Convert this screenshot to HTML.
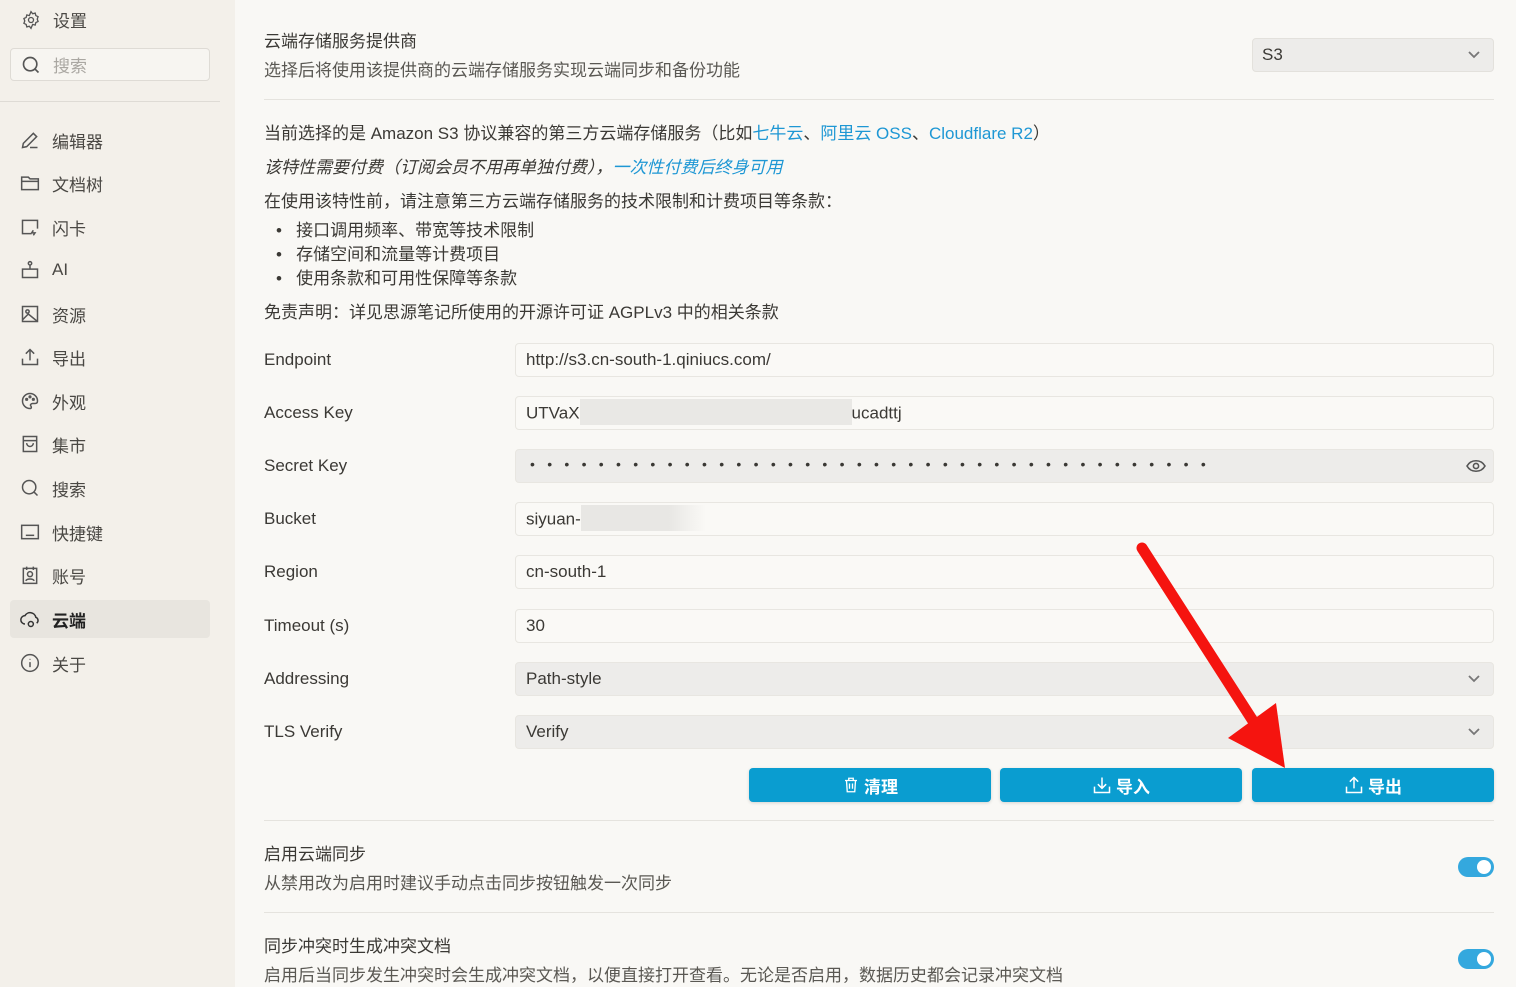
<!DOCTYPE html>
<html><head><meta charset="utf-8"><style>
*{box-sizing:border-box;margin:0;padding:0}
body{width:1516px;height:987px;overflow:hidden;background:#f9f8f5;font-family:"Liberation Sans","Noto Sans CJK SC",sans-serif;color:#3b3935;position:relative}
.a{position:absolute;white-space:nowrap}
#side{position:absolute;left:0;top:0;width:235px;height:987px;background:#f3f0ea}
.ni{position:absolute;left:10px;width:200px;height:38px;display:flex;align-items:center;font-size:17px;color:#4a4844}
.ni svg{margin:0 12px 0 10px}
.ni.on{background:#e8e5df;border-radius:4px;font-weight:bold;color:#222}
.t{font-size:17px;color:#3b3935}
.d{font-size:17px;color:#5a5853}
.lnk{color:#1e97d4}
.inp{position:absolute;left:515px;width:979px;height:34px;border:1px solid #e8e6e1;border-radius:4px;background:#faf9f6;font-size:17px;padding:6px 10px;color:#3b3935}
.gray{background:#edecea}
.lab{position:absolute;left:264px;font-size:17px;color:#3b3935}
.btn{position:absolute;top:768px;width:242px;height:34px;background:#0a9dd0;border-radius:4px;color:#fff;font-weight:bold;font-size:17px;display:flex;align-items:center;justify-content:center;gap:4px;box-shadow:0 1px 3px rgba(0,0,0,.15)}
.hr{position:absolute;left:264px;width:1230px;height:1px;background:#e5e3de}
.tg{position:absolute;left:1458px;width:36px;height:20px;border-radius:10px;background:#34a8de}
.tg:after{content:"";position:absolute;right:3px;top:3px;width:14px;height:14px;border-radius:50%;background:#fff}
.chev{position:absolute;right:12px;top:11px}
</style></head><body>
<div id="side">
<div class="a" style="left:21px;top:7px;display:flex;align-items:center;font-size:17px;color:#4a4844"><svg width="20" height="20" viewBox="0 0 24 24" fill="none" stroke="#555" stroke-width="1.6"><circle cx="12" cy="12" r="3"/><path d="M12 2l2 2.5 3-.8.8 3 2.7 1.3-1 2.9 1 2.9-2.7 1.3-.8 3-3-.8L12 22l-2-2.5-3 .8-.8-3L3.5 16l1-2.9-1-2.9 2.7-1.3.8-3 3 .8z"/></svg><span style="margin-left:12px">设置</span></div>
<div class="a" style="left:10px;top:48px;width:200px;height:33px;border:1px solid #dedbd5;border-radius:4px;background:#f7f5f1;display:flex;align-items:center;font-size:17px;color:#aaa7a2"><svg style="margin:0 12px 0 10px" width="20" height="20" viewBox="0 0 24 24" fill="none" stroke="#555" stroke-width="2"><circle cx="11" cy="11" r="8"/><path d="M17 17l4 4"/></svg>搜索</div>
<div class="a" style="left:0;top:101px;width:220px;height:1px;background:#dedbd5"></div>
<div class="ni" style="top:121px"><svg width="20" height="20" viewBox="0 0 24 24" fill="none" stroke="#555" stroke-width="1.8"><path d="M3 21l1-5L16 4l4 4L8 20zM12 21h9"/></svg>编辑器</div>
<div class="ni" style="top:164px"><svg width="20" height="20" viewBox="0 0 24 24" fill="none" stroke="#555" stroke-width="1.8"><path d="M2 5h8l2 2h10v13H2zM2 10h20"/></svg>文档树</div>
<div class="ni" style="top:208px"><svg width="20" height="20" viewBox="0 0 24 24" fill="none" stroke="#555" stroke-width="1.8"><path d="M14 20H3V4h18v10M16 16l-2 3h4l-2 3"/></svg>闪卡</div>
<div class="ni" style="top:251px"><svg width="20" height="20" viewBox="0 0 24 24" fill="none" stroke="#555" stroke-width="1.8"><circle cx="12" cy="4" r="2"/><path d="M12 6v5M3 11h18v10H3z"/></svg>AI</div>
<div class="ni" style="top:295px"><svg width="20" height="20" viewBox="0 0 24 24" fill="none" stroke="#555" stroke-width="1.8"><rect x="3" y="3" width="18" height="18"/><circle cx="9" cy="9" r="2"/><path d="M3 19l7-7 11 9"/></svg>资源</div>
<div class="ni" style="top:338px"><svg width="20" height="20" viewBox="0 0 24 24" fill="none" stroke="#555" stroke-width="1.8"><path d="M3 14v7h18v-7M12 16V3M7 8l5-5 5 5"/></svg>导出</div>
<div class="ni" style="top:382px"><svg width="20" height="20" viewBox="0 0 24 24" fill="none" stroke="#555" stroke-width="1.8"><path d="M12 3a9 9 0 100 18c2 0 2-2 1-3s0-3 2-3h3c2 0 3-1 3-3 0-5-4-9-9-9z"/><circle cx="8" cy="10" r="1"/><circle cx="12" cy="7" r="1"/><circle cx="16" cy="10" r="1"/></svg>外观</div>
<div class="ni" style="top:425px"><svg width="20" height="20" viewBox="0 0 24 24" fill="none" stroke="#555" stroke-width="1.8"><path d="M4 3h16v18H4zM4 8h16M8 11a4 4 0 008 0"/></svg>集市</div>
<div class="ni" style="top:469px"><svg width="20" height="20" viewBox="0 0 24 24" fill="none" stroke="#555" stroke-width="1.8"><circle cx="11" cy="11" r="8"/><path d="M17 17l4 4"/></svg>搜索</div>
<div class="ni" style="top:513px"><svg width="20" height="20" viewBox="0 0 24 24" fill="none" stroke="#555" stroke-width="1.8"><rect x="2" y="4" width="20" height="16"/><path d="M7 16h10"/></svg>快捷键</div>
<div class="ni" style="top:556px"><svg width="20" height="20" viewBox="0 0 24 24" fill="none" stroke="#555" stroke-width="1.8"><path d="M4 4h16v18H4zM8 2v4M16 2v4"/><circle cx="12" cy="11" r="3"/><path d="M7 19c1-3 9-3 10 0"/></svg>账号</div>
<div class="ni on" style="top:600px"><svg width="20" height="20" viewBox="0 0 24 24" fill="none" stroke="#333" stroke-width="1.8"><path d="M6 18a5 5 0 010-10 7 7 0 0113 2 4 4 0 011 7"/><circle cx="13" cy="18" r="3"/></svg>云端</div>
<div class="ni" style="top:644px"><svg width="20" height="20" viewBox="0 0 24 24" fill="none" stroke="#555" stroke-width="1.8"><circle cx="12" cy="12" r="10"/><path d="M12 11v6M12 7v1"/></svg>关于</div>
</div>

<div class="a t" style="left:264px;top:27px">云端存储服务提供商</div>
<div class="a d" style="left:264px;top:56px">选择后将使用该提供商的云端存储服务实现云端同步和备份功能</div>
<div class="a" style="left:1252px;top:38px;width:242px;height:34px;background:#edecea;border:1px solid #e3e1dc;border-radius:4px;font-size:17px;padding:6px 9px">S3<svg class="chev" width="14" height="10" viewBox="0 0 14 10"><path d="M2 2l5 5 5-5" fill="none" stroke="#777" stroke-width="1.8"/></svg></div>
<div class="hr" style="top:99px"></div>

<div class="a t" style="left:264px;top:119px">当前选择的是 Amazon S3 协议兼容的第三方云端存储服务（比如<span class="lnk">七牛云</span>、<span class="lnk">阿里云 OSS</span>、<span class="lnk">Cloudflare R2</span>）</div>
<div class="a t" style="left:264px;top:153px;font-style:italic">该特性需要付费（订阅会员不用再单独付费），<span class="lnk">一次性付费后终身可用</span></div>
<div class="a t" style="left:264px;top:187px">在使用该特性前，请注意第三方云端存储服务的技术限制和计费项目等条款：</div>
<div class="a t" style="left:276px;top:216px">•&nbsp;&nbsp;&nbsp;接口调用频率、带宽等技术限制</div>
<div class="a t" style="left:276px;top:240px">•&nbsp;&nbsp;&nbsp;存储空间和流量等计费项目</div>
<div class="a t" style="left:276px;top:264px">•&nbsp;&nbsp;&nbsp;使用条款和可用性保障等条款</div>
<div class="a t" style="left:264px;top:298px">免责声明：详见思源笔记所使用的开源许可证 AGPLv3 中的相关条款</div>

<div class="lab" style="top:350px">Endpoint</div><div class="inp" style="top:343px">http://s3.cn-south-1.qiniucs.com/</div>
<div class="lab" style="top:403px">Access Key</div><div class="inp" style="top:396px">UTVaX<span style="display:inline-block;width:272px;height:26px;background:#e9e8e5;vertical-align:middle;margin-top:-4px"></span>ucadttj</div>
<div class="lab" style="top:456px">Secret Key</div><div class="inp gray" style="top:449px;letter-spacing:12.3px;font-size:14px;padding-top:6px;padding-left:14px">••••••••••••••••••••••••••••••••••••••••<svg style="position:absolute;right:7px;top:9px" width="20" height="14" viewBox="0 0 20 14"><path d="M1 7c4-7 14-7 18 0-4 7-14 7-18 0z" fill="none" stroke="#555" stroke-width="1.6"/><circle cx="10" cy="7" r="2.6" fill="none" stroke="#555" stroke-width="1.6"/></svg></div>
<div class="lab" style="top:509px">Bucket</div><div class="inp" style="top:502px">siyuan-<span style="display:inline-block;width:125px;height:26px;background:linear-gradient(90deg,#e8e7e4 70%,#faf9f6);vertical-align:middle;margin-top:-4px"></span></div>
<div class="lab" style="top:562px">Region</div><div class="inp" style="top:555px">cn-south-1</div>
<div class="lab" style="top:616px">Timeout (s)</div><div class="inp" style="top:609px">30</div>
<div class="lab" style="top:669px">Addressing</div><div class="inp gray" style="top:662px">Path-style<svg class="chev" width="14" height="10" viewBox="0 0 14 10"><path d="M2 2l5 5 5-5" fill="none" stroke="#777" stroke-width="1.8"/></svg></div>
<div class="lab" style="top:722px">TLS Verify</div><div class="inp gray" style="top:715px">Verify<svg class="chev" width="14" height="10" viewBox="0 0 14 10"><path d="M2 2l5 5 5-5" fill="none" stroke="#777" stroke-width="1.8"/></svg></div>

<div class="btn" style="left:749px"><svg width="18" height="18" viewBox="0 0 24 24" fill="none" stroke="#fff" stroke-width="1.8"><path d="M4 6h16M9 6V3h6v3M6 6l1 15h10l1-15M10 10v7M14 10v7"/></svg>清理</div>
<div class="btn" style="left:1000px"><svg width="20" height="20" viewBox="0 0 24 24" fill="none" stroke="#fff" stroke-width="1.8"><path d="M3 14v7h18v-7M12 3v13M7 11l5 5 5-5"/></svg>导入</div>
<div class="btn" style="left:1252px"><svg width="20" height="20" viewBox="0 0 24 24" fill="none" stroke="#fff" stroke-width="1.8"><path d="M3 14v7h18v-7M12 16V3M7 8l5-5 5 5"/></svg>导出</div>

<div class="hr" style="top:820px"></div>
<div class="a t" style="left:264px;top:840px">启用云端同步</div>
<div class="a d" style="left:264px;top:869px">从禁用改为启用时建议手动点击同步按钮触发一次同步</div>
<div class="tg" style="top:857px"></div>
<div class="hr" style="top:912px"></div>
<div class="a t" style="left:264px;top:932px">同步冲突时生成冲突文档</div>
<div class="a d" style="left:264px;top:961px">启用后当同步发生冲突时会生成冲突文档，以便直接打开查看。无论是否启用，数据历史都会记录冲突文档</div>
<div class="tg" style="top:949px"></div>

<svg class="a" style="left:0;top:0" width="1516" height="987"><line x1="1142" y1="548" x2="1262" y2="735" stroke="#f5140f" stroke-width="11" stroke-linecap="round"/><polygon points="1228,738 1276,703 1285,768" fill="#f5140f"/></svg>
</body></html>
